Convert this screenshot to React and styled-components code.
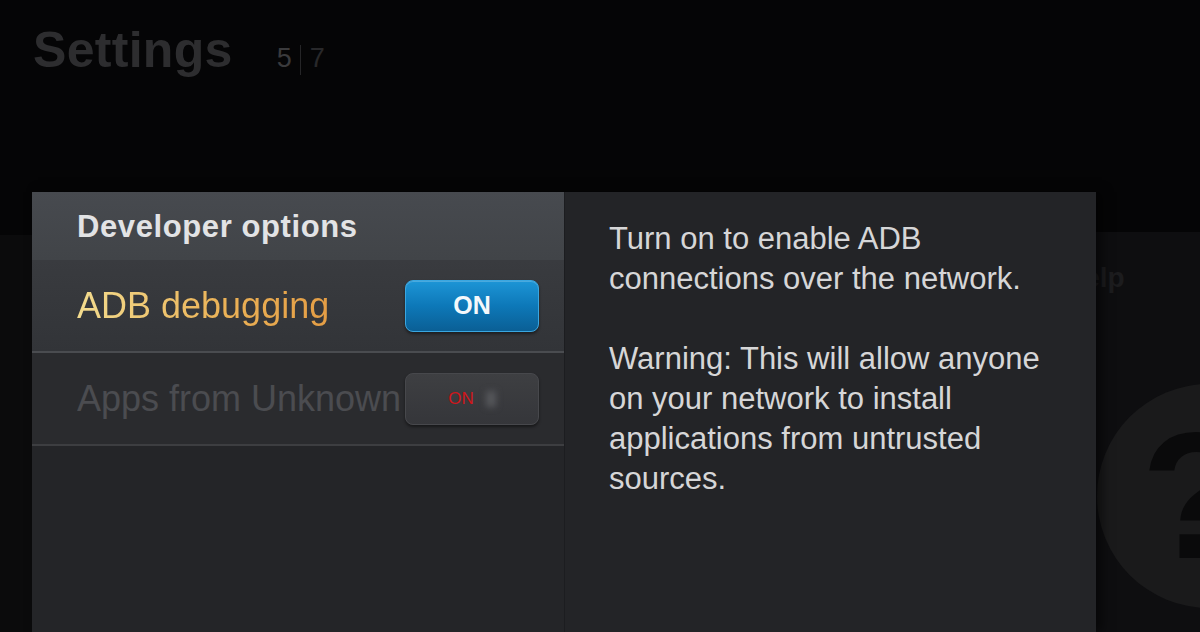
import styled, { createGlobalStyle } from 'styled-components'

const GlobalStyle = createGlobalStyle`
	html, body {
		margin: 0;
		padding: 0;
		background: #050506;
	}
	body {
		font-family: "Liberation Sans", Arial, sans-serif;
	}
`

const Screen = styled.div`
	position: relative;
	width: 1200px;
	height: 632px;
	overflow: hidden;
	display: flex;
	flex-direction: column;
	background: #050506;
`

/* dimmed home screen that sits under the dialog */
const Backdrop = styled.div`
	position: absolute;
	inset: 0;
	z-index: 0;
`
const Tile = styled.div`
	position: absolute;
	top: ${p => p.$top}px;
	left: ${p => p.$left}px;
	width: ${p => p.$width}px;
	height: 420px;
	background: ${p => p.$bg};
	display: flex;
	flex-direction: column;
	padding: 30px 0 0 24px;
	box-sizing: border-box;
`
const TileLabel = styled.span`
	font-size: 28px;
	font-weight: bold;
	color: #1c1c1e;
`
const HelpCircle = styled.div`
	width: 224px;
	height: 224px;
	margin: 90px 0 0 33px;
	padding-left: 44px;
	box-sizing: border-box;
	border-radius: 50%;
	background: #1a1a1b;
	display: flex;
	align-items: center;
	font-size: 180px;
	font-weight: bold;
	line-height: 1;
	color: #0a0a0b;
`

const TopBar = styled.header`
	position: relative;
	z-index: 1;
	height: 192px;
	display: flex;
	align-items: baseline;
	padding: 25px 0 0 33px;
	box-sizing: border-box;
`
const Title = styled.h1`
	margin: 0;
	font-size: 50px;
	font-weight: bold;
	letter-spacing: 0.3px;
	line-height: 1;
	color: #2d2d2f;
`
const Pager = styled.div`
	display: flex;
	align-items: baseline;
	margin-left: 44px;
	font-size: 27px;
	line-height: 1;
`
const PageNum = styled.span`
	color: ${p => (p.$current ? '#3a3a3c' : '#28282a')};
`
const PageSep = styled.span`
	width: 1px;
	height: 30px;
	margin: 0 9px 0 8px;
	align-self: center;
	background: #252527;
`

const Dialog = styled.div`
	position: relative;
	z-index: 1;
	flex: 1;
	margin-left: 32px;
	display: grid;
	grid-template-columns: 532px 532px;
	box-shadow: 6px 0 10px rgba(0, 0, 0, 0.5);
	width: 1064px;
`

const OptionsPanel = styled.section`
	display: flex;
	flex-direction: column;
	background: #242528;
`
const PanelHeader = styled.div`
	height: 68px;
	display: flex;
	align-items: center;
	padding-left: 45px;
	background: linear-gradient(180deg, #474a4f 0%, #414448 100%);
	font-size: 31px;
	font-weight: bold;
	letter-spacing: 0.6px;
	line-height: 1;
	color: #e2e3e5;
`
const Row = styled.div`
	height: 91px;
	display: flex;
	align-items: center;
	padding: 0 25px 0 45px;
	background: ${p => (p.$active ? 'linear-gradient(180deg, #393b3f 0%, #323438 100%)' : '#2a2b2e')};
	border-bottom: 2px solid ${p => (p.$active ? '#4a4c50' : '#3d3e41')};
`
const RowLabel = styled.span`
	flex: 1;
	min-width: 0;
	margin-right: 4px;
	overflow: hidden;
	white-space: nowrap;
	font-size: 36px;
	line-height: 1.2;
	${p =>
		p.$active
			? `
		background: linear-gradient(90deg, #f3dc8f 0%, #ebb257 45%, #df8f38 100%);
		-webkit-background-clip: text;
		background-clip: text;
		color: transparent;
	`
			: 'color: #4b4c50;'}
`
const Toggle = styled.div`
	flex: none;
	width: 134px;
	height: 52px;
	box-sizing: border-box;
	border-radius: 8px;
	display: flex;
	align-items: center;
	justify-content: center;
	gap: 12px;
	${p =>
		p.$on
			? `
		background: linear-gradient(180deg, #1d95d6 0%, #0d78b8 50%, #0a5f95 100%);
		border: 1px solid #3aa6e0;
		box-shadow: 0 2px 3px rgba(0, 0, 0, 0.45), inset 0 1px 0 rgba(255, 255, 255, 0.2);
	`
			: `
		background: linear-gradient(180deg, #3e3f42 0%, #35363a 100%);
		border: 1px solid #47484c;
		box-shadow: 0 2px 3px rgba(0, 0, 0, 0.45);
	`}
`
const ToggleText = styled.span`
	font-size: ${p => (p.$disabled ? '17px' : '25px')};
	font-weight: ${p => (p.$disabled ? 'normal' : 'bold')};
	color: ${p => (p.$disabled ? '#d0161b' : '#f4f8fb')};
	line-height: 1;
`
const BlurMark = styled.span`
	width: 10px;
	height: 16px;
	background: #55565a;
	filter: blur(3px);
`

const InfoPanel = styled.section`
	background: #232427;
	border-left: 1px solid #1c1d20;
	padding: 27px 40px 0 44px;
	font-size: 31px;
	line-height: 40px;
	color: #d6d6d7;
`
const InfoPara = styled.p`
	margin: 0 0 40px;
`

const App = () => {
	return (
		<>
			<GlobalStyle />
			<Screen>
				<Backdrop>
					<Tile $top={235} $left={-200} $width={232} $bg="#0b0b0c" />
					<Tile $top={232} $left={1040} $width={300} $bg="#0e0e10">
						<TileLabel>Help</TileLabel>
						<HelpCircle>?</HelpCircle>
					</Tile>
				</Backdrop>

				<TopBar>
					<Title>Settings</Title>
					<Pager>
						<PageNum $current>5</PageNum>
						<PageSep />
						<PageNum>7</PageNum>
					</Pager>
				</TopBar>

				<Dialog>
					<OptionsPanel>
						<PanelHeader>Developer options</PanelHeader>
						<Row $active>
							<RowLabel $active>ADB debugging</RowLabel>
							<Toggle $on>
								<ToggleText>ON</ToggleText>
							</Toggle>
						</Row>
						<Row>
							<RowLabel>Apps from Unknown Sources</RowLabel>
							<Toggle>
								<ToggleText $disabled>ON</ToggleText>
								<BlurMark />
							</Toggle>
						</Row>
					</OptionsPanel>
					<InfoPanel>
						<InfoPara>
							Turn on to enable ADB
							<br />
							connections over the network.
						</InfoPara>
						<InfoPara>
							Warning: This will allow anyone
							<br />
							on your network to install
							<br />
							applications from untrusted
							<br />
							sources.
						</InfoPara>
					</InfoPanel>
				</Dialog>
			</Screen>
		</>
	)
}

export default App
